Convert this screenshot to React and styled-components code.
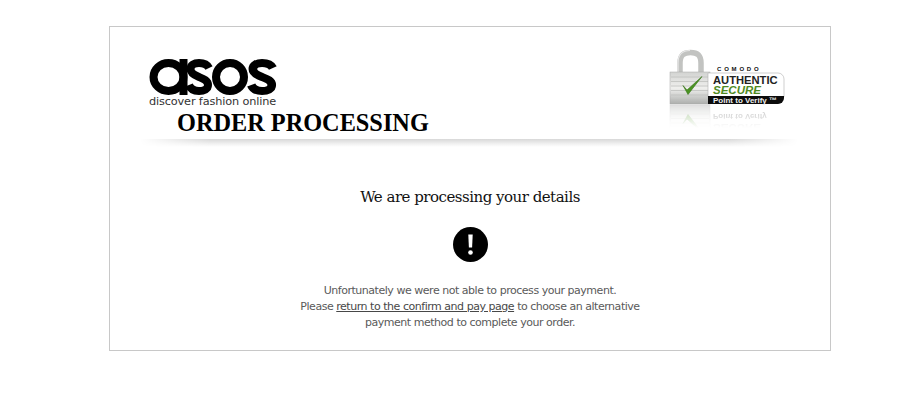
import React from "react";
import styled, { createGlobalStyle } from "styled-components";

const Global = createGlobalStyle`
  html, body { margin: 0; padding: 0; background: #fff; }
`;

const Page = styled.div`
  width: 913px;
  height: 411px;
  padding: 26px 0 0 109px;
  box-sizing: border-box;
  overflow: hidden;
`;

const Card = styled.main`
  width: 722px;
  height: 325px;
  box-sizing: border-box;
  border: 1px solid #c8c8c8;
  padding-top: 21px;
  display: flex;
  flex-direction: column;
`;

const Header = styled.header`
  display: flex;
  justify-content: space-between;
  align-items: flex-start;
  height: 91px;
  padding: 0 44px 0 39px;
`;

const Brand = styled.div`
  display: flex;
  flex-direction: column;
  padding-top: 10px;
`;

const Tagline = styled.div`
  font: 11.3px/12px "DejaVu Sans", sans-serif;
  color: #333;
  letter-spacing: -0.15px;
`;

const Heading = styled.h1`
  margin: 1px 0 0 28px;
  font: bold 24.3px/27px "Liberation Serif", serif;
  color: #000;
  white-space: nowrap;
`;

const Divider = styled.div`
  height: 8px;
  margin: 0 32px 0 30px;
  background: linear-gradient(to bottom, #d8d8d8 0%, #efefef 55%, #ffffff 100%);
  mask-image: linear-gradient(to right, transparent 0, #000 70px, #000 calc(100% - 70px), transparent 100%);
`;

const Body = styled.section`
  display: flex;
  flex-direction: column;
  align-items: center;
  padding-top: 39px;
`;

const Title = styled.h2`
  margin: 0;
  font: normal 15px/22px "DejaVu Serif", serif;
  letter-spacing: -0.5px;
  color: #111;
`;

const AlertIcon = styled.svg`
  width: 35px;
  height: 35px;
  margin: 19px 0 21px;
  display: block;
`;

const Message = styled.p`
  margin: 0;
  width: 400px;
  text-align: center;
  font: 11px/16px "DejaVu Sans", sans-serif;
  letter-spacing: -0.47px;
  color: #5a5a5a;
`;

const ConfirmLink = styled.a`
  color: #484848;
  text-decoration: underline;
`;

const S_PATH =
  "M23 10C21 6 17 5 13 5C8 5 4.500 7 4.500 11C4.500 15 8 17 13 19C18 21 22 22.500 22 27C22 31 18 33 13 33C8 33 4.500 31 3 27";

const AsosLogo = () => (
  <svg width="128" height="38" viewBox="0 0 128 38" style={{ display: "block" }} aria-label="asos">
    <g fill="none" stroke="#000" strokeWidth="8">
      <ellipse cx="19.500" cy="19" rx="15" ry="14" />
      <path d="M34.500 1v36" />
      <path d={S_PATH} transform="translate(37 0)" />
      <ellipse cx="81" cy="19" rx="14" ry="14" />
      <path d={S_PATH} transform="translate(99 0) scale(1.08 1)" />
    </g>
  </svg>
);

const LockArt = () => (
  <>
    <path d="M12 26V15C12 7 16 4.500 22.500 4.500S33 7 33 15v11" fill="none" stroke="#c2c3c1" strokeWidth="5.500" />
    <path d="M10 24V15C10 6 15 2.500 22 2.500" fill="none" stroke="#e8e8e8" strokeWidth="1.200" />
    <rect x="2" y="24" width="40" height="32" fill="url(#lock)" stroke="#a8a8a8" strokeWidth="0.500" />
    <path d="M3 29h38M3 33.500h38M3 38h38M3 42.500h38M3 47h38M3 51.500h38" stroke="#bfc0be" strokeWidth="0.800" />
    <path d="M15 37.500l4 4.500L34 28.500 20 46.500z" fill="#4a9322" stroke="#357315" strokeWidth="0.600" />
  </>
);

const Seal = () => (
  <svg width="118" height="92" viewBox="0 0 118 92" style={{ display: "block" }} aria-label="Comodo Authentic Secure">
    <defs>
      <linearGradient id="lock" x1="0" x2="0" y1="0" y2="1">
        <stop offset="0" stopColor="#d2d3d1" />
        <stop offset="0.5" stopColor="#f0f0ee" />
        <stop offset="1" stopColor="#adafad" />
      </linearGradient>
      <linearGradient id="fadeStop" x1="0" x2="0" y1="57" y2="80" gradientUnits="userSpaceOnUse">
        <stop offset="0" stopColor="#fff" stopOpacity="0.4" />
        <stop offset="1" stopColor="#fff" stopOpacity="0" />
      </linearGradient>
      <mask id="fadeMask" maskUnits="userSpaceOnUse" x="0" y="56" width="118" height="36">
        <rect x="0" y="56" width="118" height="36" fill="url(#fadeStop)" />
      </mask>
    </defs>
    <LockArt />
    <path d="M40 25h70a6 6 0 0 1 6 6v18H40z" fill="#fff" stroke="#b0b0b0" strokeWidth="0.600" />
    <path d="M40 48h76v2a6 6 0 0 1-6 6H40z" fill="#0c0c0c" />
    <text x="49" y="23" fontFamily="Liberation Sans, sans-serif" fontSize="6" fontWeight="700" letterSpacing="2.800" fill="#111">COMODO</text>
    <text x="45" y="36" fontFamily="Liberation Sans, sans-serif" fontSize="11.200" fontWeight="700" fill="#222">AUTHENTIC</text>
    <text x="45" y="46" fontFamily="Liberation Sans, sans-serif" fontSize="11.500" fontWeight="700" fontStyle="italic" fill="#4f8a22">SECURE</text>
    <text x="45" y="55" fontFamily="Liberation Sans, sans-serif" fontSize="8" fontWeight="700" fill="#eee">Point to Verify ™</text>
    <g mask="url(#fadeMask)">
      <g transform="translate(0 113) scale(1 -1)">
        <LockArt />
        <text x="45" y="47" fontFamily="Liberation Sans, sans-serif" fontSize="8" fontWeight="700" fill="#555">Point to Verify</text>
        <text x="45" y="37" fontFamily="Liberation Sans, sans-serif" fontSize="11.500" fontWeight="700" fill="#888">SECURE</text>
      </g>
    </g>
  </svg>
);

export default function App() {
  return (
    <Page>
      <Global />
      <Card>
        <Header>
          <Brand>
            <AsosLogo />
            <Tagline>discover fashion online</Tagline>
            <Heading>ORDER PROCESSING</Heading>
          </Brand>
          <Seal />
        </Header>
        <Divider />
        <Body>
          <Title>We are processing your details</Title>
          <AlertIcon viewBox="0 0 35 35" aria-label="alert">
            <circle cx="17.500" cy="17.500" r="17.500" fill="#000" />
            <path d="M15.300 7.500h4.400l-.6 13h-3.200z" fill="#fff" />
            <circle cx="17.500" cy="25.500" r="2.300" fill="#fff" />
          </AlertIcon>
          <Message>
            Unfortunately we were not able to process your payment.
            <br />
            Please <ConfirmLink href="#">return to the confirm and pay page</ConfirmLink> to choose an alternative
            <br />
            payment method to complete your order.
          </Message>
        </Body>
      </Card>
    </Page>
  );
}
